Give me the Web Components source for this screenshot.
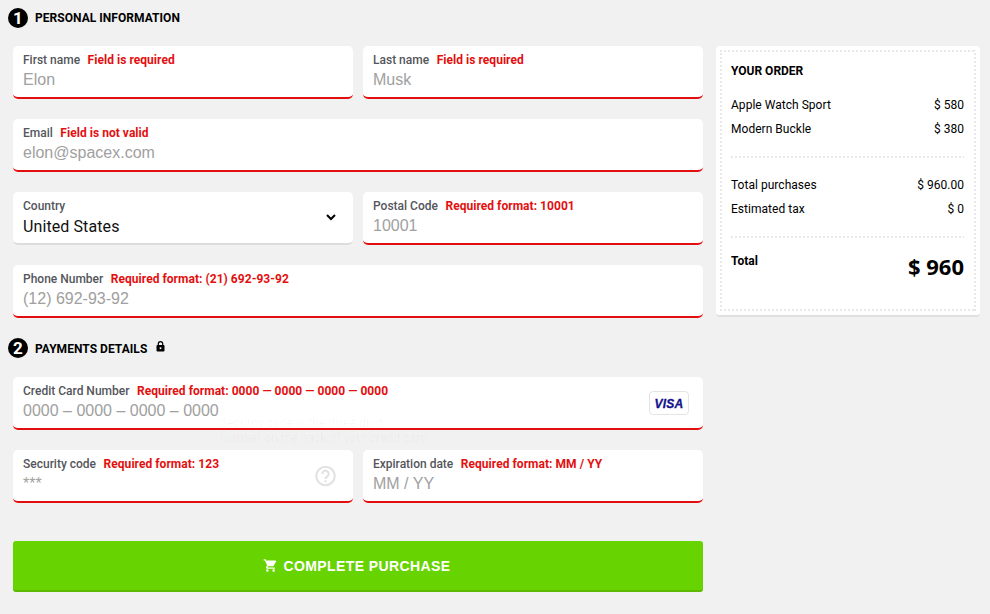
<!DOCTYPE html>
<html>
<head>
<meta charset="utf-8">
<title>Checkout</title>
<style>
    html, body { margin: 0; padding: 0; background: #f1f1f1; }
    body { font-family: Roboto, sans-serif; }
</style>
</head>
<body>
<check-out>
    <div slot="form">
        <step-title num="1">PERSONAL INFORMATION</step-title>
        <field-row>
            <form-field label="First name" error="Field is required" value="Elon"></form-field>
            <form-field label="Last name" error="Field is required" value="Musk"></form-field>
        </field-row>
        <field-row>
            <form-field label="Email" error="Field is not valid" value="elon@spacex.com"></form-field>
        </field-row>
        <field-row>
            <form-field label="Country" value="United States" select></form-field>
            <form-field label="Postal Code" error="Required format: 10001" value="10001"></form-field>
        </field-row>
        <field-row>
            <form-field label="Phone Number" error="Required format: (21) 692-93-92" value="(12) 692-93-92"></form-field>
        </field-row>
        <step-title num="2" lock>PAYMENTS DETAILS</step-title>
        <field-row>
            <form-field label="Credit Card Number" error="Required format: 0000 — 0000 — 0000 — 0000" value="0000 – 0000 – 0000 – 0000">
                <svg slot="icon" width="40" height="24" viewBox="0 0 40 24">
                    <rect x=".5" y=".5" width="39" height="23" rx="3.5" fill="#fff" stroke="#e4e4e4"/>
                    <text x="20" y="17" text-anchor="middle" font-family="Liberation Sans, sans-serif" font-size="12" font-weight="700" font-style="italic" letter-spacing=".2" fill="#12128a" stroke="#12128a" stroke-width=".3">VISA</text>
                </svg>
            </form-field>
        </field-row>
        <field-row>
            <form-field label="Security code" error="Required format: 123" value="***">
                <svg slot="icon" style="margin-right:3px" width="21" height="21" viewBox="0 0 20 20">
                    <circle cx="10" cy="10" r="8.8" fill="none" stroke="#e2e2e2" stroke-width="2"/>
                    <path d="M7 8a3 3 0 1 1 4.6 2.5c-1 .7-1.6 1.2-1.6 2.4" fill="none" stroke="#e2e2e2" stroke-width="2"/>
                    <rect x="9" y="14" width="2" height="2" fill="#e2e2e2"/>
                </svg>
                <span slot="tip">Security code is the three digit<br>number on the back of your credit card</span>
            </form-field>
            <form-field label="Expiration date" error="Required format: MM / YY" value="MM / YY"></form-field>
        </field-row>
        <buy-button>COMPLETE PURCHASE</buy-button>
    </div>
    <order-summary slot="aside"></order-summary>
</check-out>

<script>
class CheckOut extends HTMLElement {
    constructor() {
        super();
        this.attachShadow({ mode: 'open' });
        this.shadowRoot.innerHTML = `
            <style>
                :host {
                    display: grid;
                    grid-template-columns: 690px 264px;
                    column-gap: 13px;
                    padding: 0 10px 0 13px;
                    align-items: start;
                    width: 990px;
                    height: 614px;
                    box-sizing: border-box;
                    overflow: hidden;
                }
                .aside { margin-top: 46px; display: block; }
            </style>
            <div><slot name="form"></slot></div>
            <div class="aside"><slot name="aside"></slot></div>
        `;
    }
}

class StepTitle extends HTMLElement {
    constructor() {
        super();
        this.attachShadow({ mode: 'open' });
        const num = this.getAttribute('num');
        const lock = this.hasAttribute('lock');
        this.shadowRoot.innerHTML = `
            <style>
                :host {
                    display: flex;
                    align-items: center;
                    height: 20px;
                    margin: 8px 0 ${lock ? 19 : 18}px -5px;
                    font: 700 12px Roboto, sans-serif;
                    color: #000;
                }
                .num {
                    width: 20px;
                    height: 20px;
                    border-radius: 50%;
                    background: #000;
                    color: #fff;
                    font-size: 17px;
                    line-height: 20px;
                    text-align: center;
                    margin-right: 7px;
                }
                .text { letter-spacing: .04px; ${lock ? 'padding-top: 1px;' : ''} }
                svg { margin: -3px 0 0 9px; }
            </style>
            <span class="num">${num}</span>
            <span class="text"><slot></slot></span>
            ${lock ? `<svg width="9" height="11" viewBox="0 0 9 11"><path d="M2.3 4.5V2.8a2.2 2.2 0 0 1 4.4 0v1.7" fill="none" stroke="#000" stroke-width="1.2"/><rect x=".5" y="4" width="8" height="6.5" rx="1" fill="#000"/><rect x="3.7" y="6.3" width="1.6" height="1.8" fill="#fff"/></svg>` : ''}
        `;
    }
}

class FieldRow extends HTMLElement {
    constructor() {
        super();
        this.attachShadow({ mode: 'open' });
        this.shadowRoot.innerHTML = `
            <style>
                :host {
                    display: flex;
                    gap: 10px;
                    margin-bottom: 20px;
                }
                ::slotted(*) { flex: 1 1 0; }
            </style>
            <slot></slot>
        `;
    }
}

class FormField extends HTMLElement {
    constructor() {
        super();
        this.attachShadow({ mode: 'open' });
        const label = this.getAttribute('label');
        const error = this.getAttribute('error');
        const value = this.getAttribute('value');
        const isSelect = this.hasAttribute('select');
        this.shadowRoot.innerHTML = `
            <style>
                :host {
                    display: block;
                    position: relative;
                    height: 53px;
                    box-sizing: border-box;
                    padding: 7px 10px 0;
                    background: #fff;
                    border-radius: 5px;
                    border-bottom: 2px solid ${error ? '#e30f0f' : '#dcdcdc'};
                    font-family: Roboto, sans-serif;
                }
                .top {
                    display: flex;
                    gap: 7.5px;
                    font-size: 12px;
                    font-weight: 500;
                    line-height: 14px;
                    white-space: nowrap;
                }
                .label { color: #54565b; }
                .error { color: #e30f0f; font-weight: 700; letter-spacing: .04px; }
                .value {
                    font-family: "Liberation Sans", sans-serif;
                    font-size: 16px;
                    line-height: 20px;
                    margin-top: 3px;
                    color: #a0a0a0;
                    white-space: nowrap;
                }
                .value.select {
                    font-family: Roboto, sans-serif;
                    color: #111;
                    letter-spacing: .1px;
                    margin-top: 4px;
                }
                .icon {
                    position: absolute;
                    right: 14px;
                    top: 50%;
                    transform: translateY(-50%);
                    display: flex;
                }
                .chev { position: absolute; right: 17px; top: 22px; }
                .tip {
                    position: absolute;
                    left: 207px;
                    bottom: 100%;
                    margin-bottom: 4px;
                    font-size: 12px;
                    font-weight: 500;
                    line-height: 15px;
                    white-space: nowrap;
                    color: rgba(0, 0, 0, .03);
                }
            </style>
            <div class="top">
                <span class="label">${label}</span>
                ${error ? `<span class="error">${error}</span>` : ''}
            </div>
            <div class="value ${isSelect ? 'select' : ''}">${value}</div>
            <div class="icon"><slot name="icon"></slot></div>
            <div class="tip"><slot name="tip"></slot></div>
            ${isSelect ? `<svg class="chev" width="10" height="7" viewBox="0 0 10 7"><path d="M1 1l4 4 4-4" fill="none" stroke="#000" stroke-width="2"/></svg>` : ''}
        `;
    }
}

class BuyButton extends HTMLElement {
    constructor() {
        super();
        this.attachShadow({ mode: 'open' });
        this.shadowRoot.innerHTML = `
            <style>
                :host {
                    display: flex;
                    align-items: center;
                    justify-content: center;
                    gap: 5px;
                    height: 51px;
                    margin-top: 38px;
                    padding-right: 2px;
                    box-sizing: border-box;
                    background: #67d300;
                    border-bottom: 2px solid #5cb800;
                    border-radius: 3px;
                    color: #fff;
                    font: 700 14px "Liberation Sans", sans-serif;
                    letter-spacing: .4px;
                }
                svg { display: block; }
            </style>
            <svg width="15" height="15" viewBox="0 0 24 24" fill="#fff"><path d="M7 18a2 2 0 1 0 0 4 2 2 0 0 0 0-4zM1 2v2h2l3.6 7.6L5.2 14c-.1.3-.2.6-.2 1 0 1.1.9 2 2 2h12v-2H7.4c-.1 0-.2-.1-.2-.3l.9-1.7h7.5c.7 0 1.4-.4 1.7-1l3.6-6.5c.1-.1.1-.3.1-.5 0-.6-.4-1-1-1H5.2l-.9-2H1zm16 16a2 2 0 1 0 0 4 2 2 0 0 0 0-4z"/></svg>
            <slot></slot>
        `;
    }
}

class OrderSummary extends HTMLElement {
    constructor() {
        super();
        this.attachShadow({ mode: 'open' });
        this.shadowRoot.innerHTML = `
            <style>
                :host {
                    display: block;
                    height: 271px;
                    box-sizing: border-box;
                    padding: 4px;
                    background: #fff;
                    border-radius: 4px;
                    border-bottom: 2px solid #dfdfdf;
                    font: 400 12px Roboto, sans-serif;
                    color: #000;
                }
                .inner {
                    height: 100%;
                    box-sizing: border-box;
                    padding: 14px 12px 0 11px;
                    background:
                        repeating-linear-gradient(90deg, #e8e8e8 0 2px, transparent 2px 4px) top / 100% 2px no-repeat,
                        repeating-linear-gradient(90deg, #e8e8e8 0 2px, transparent 2px 4px) bottom / 100% 2px no-repeat,
                        repeating-linear-gradient(0deg, #e8e8e8 0 2px, transparent 2px 4px) left / 2px 100% no-repeat,
                        repeating-linear-gradient(0deg, #e8e8e8 0 2px, transparent 2px 4px) right / 2px 100% no-repeat;
                }
                h3 { margin: 0 0 20px; font-size: 12px; font-weight: 700; line-height: 14px; }
                .row {
                    display: flex;
                    justify-content: space-between;
                    line-height: 14px;
                    margin-bottom: 10px;
                    letter-spacing: .03px;
                }
                hr {
                    border: 0;
                    height: 2px;
                    background: repeating-linear-gradient(90deg, #e8e8e8 0 2px, transparent 2px 4px);
                    margin: 20px 0 20px;
                }
                .total {
                    display: flex;
                    justify-content: space-between;
                    align-items: flex-start;
                    font-weight: 700;
                    line-height: 14px;
                    margin-top: -4px;
                }
                .amount {
                    font-family: "Noto Sans", sans-serif;
                    font-size: 22px;
                    line-height: 30px;
                    margin-top: -3px;
                }
            </style>
            <div class="inner">
                <h3>YOUR ORDER</h3>
                <div class="row"><span>Apple Watch Sport</span><span>$ 580</span></div>
                <div class="row"><span>Modern Buckle</span><span>$ 380</span></div>
                <hr>
                <div class="row"><span>Total purchases</span><span>$ 960.00</span></div>
                <div class="row"><span>Estimated tax</span><span>$ 0</span></div>
                <hr>
                <div class="total"><span>Total</span><span class="amount">$ 960</span></div>
            </div>
        `;
    }
}

customElements.define('check-out', CheckOut);
customElements.define('step-title', StepTitle);
customElements.define('field-row', FieldRow);
customElements.define('form-field', FormField);
customElements.define('buy-button', BuyButton);
customElements.define('order-summary', OrderSummary);
</script>
</body>
</html>
